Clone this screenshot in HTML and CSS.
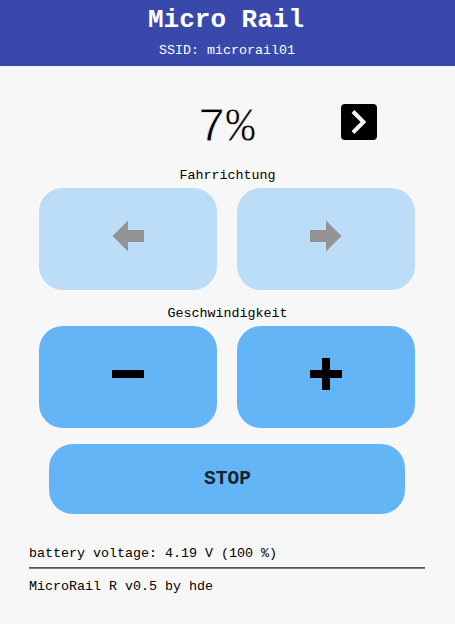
FILE: index.html
```html
<!DOCTYPE html>
<html lang="de">
<head>
<meta charset="utf-8">
<title>Micro Rail</title>
<link rel="stylesheet" href="styles.css">
</head>
<body>
<header class="topbar">
  <h1>Micro Rail</h1>
  <p>SSID: microrail01</p>
</header>
<main>
  <div class="status">
    <span class="speed">7%</span>
    <svg class="direction" viewBox="0 0 36 36"><rect width="36" height="36" rx="4"/><path d="M12 7.5L22.5 18 12 28.5" fill="none" stroke="#f7f7f7" stroke-width="4"/></svg>
  </div>
  <div class="label">Fahrrichtung</div>
  <div class="row">
    <button class="btn disabled" aria-label="Rückwärts"><svg viewBox="0 0 32 32"><path d="M.5 16L16 .5V10h16v12H16v9.5z"/></svg></button>
    <button class="btn disabled" aria-label="Vorwärts"><svg viewBox="0 0 32 32"><path d="M31.500 16L16 .5V10H0v12h16v9.5z"/></svg></button>
  </div>
  <div class="label second">Geschwindigkeit</div>
  <div class="row">
    <button class="btn" aria-label="Langsamer"><svg viewBox="0 0 32 32"><path d="M0 12h32v8H0z"/></svg></button>
    <button class="btn" aria-label="Schneller"><svg viewBox="0 0 32 32"><path d="M0 12h12V0h8v12h12v8H20v12h-8V20H0z"/></svg></button>
  </div>
  <button class="stop">STOP</button>
</main>
<footer>
  <p>battery voltage: 4.19 V (100 %)</p>
  <hr>
  <p>MicroRail R v0.5 by hde</p>
</footer>
</body>
</html>
```
FILE: styles.css
```css
* { box-sizing: border-box; }
body { margin: 0; background: #f7f7f7; color: #000; font-family: "Courier New", "Liberation Mono", monospace; font-size: 13.333px; }
p, h1 { margin: 0; }
.topbar { height: 66px; background: #3949ab; color: #fff; text-align: center; padding-top: 5px; }
.topbar h1 { font-size: 26px; line-height: 30px; padding-right: 3px; }
.topbar p { font-size: 13.333px; line-height: 16px; margin-top: 8px; padding-right: 1px; }
main { padding: 38px 39px 0; }
.status { display: grid; grid-template-columns: 1fr auto 1fr; height: 64px; }
.speed { grid-column: 2; font-size: 48px; line-height: 48px; padding-right: 3px; -webkit-text-stroke: 0.8px #f7f7f7; }
.direction { width: 36px; height: 36px; justify-self: end; margin-right: 39px; }
.label { text-align: center; line-height: 16px; margin-bottom: 4px; }
.second { margin-top: 16px; }
.row { display: flex; gap: 20px; width: 376px; }
.btn { flex: 1; height: 102px; border: 0; border-radius: 24px; background: #64b5f6; display: flex; align-items: center; justify-content: center; padding: 0 0 6px; }
.btn svg { width: 32px; height: 32px; }
.disabled { background: #bbddf8; }
.disabled svg { fill: #949494; }
.stop { display: block; width: 356px; height: 70px; margin: 16px 0 0 10px; padding: 0 0 0 1px; border: 0; border-radius: 24px; background: #64b5f6; color: #142431; font: bold 19.5px "Courier New", "Liberation Mono", monospace; }
footer { margin: 32px 30px 0 29px; line-height: 16px; }
hr { border: 0; height: 2px; background: #808080; border-top: 1px solid #555; margin: 5px 0 10px; }
```
